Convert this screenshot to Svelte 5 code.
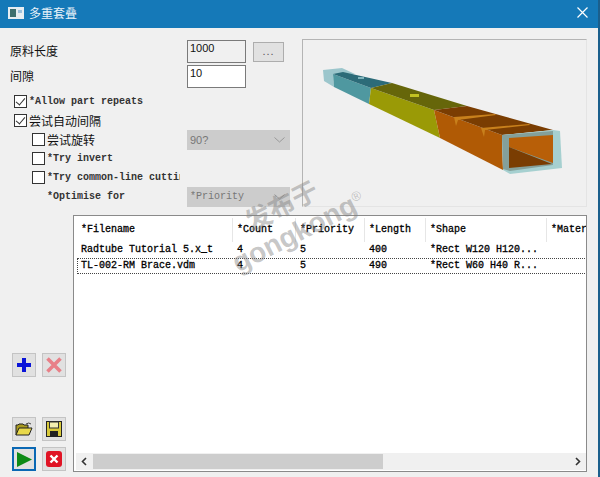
<script>
  const columns = [
    { name: "*Filename", width: 156 },
    { name: "*Count", width: 63 },
    { name: "*Priority", width: 69 },
    { name: "*Length", width: 61 },
    { name: "*Shape", width: 121 },
    { name: "*Mater", width: 60 }
  ];
  const rows = [
    { cells: ["Radtube Tutorial 5.x_t", "4", "5", "400", "*Rect W120 H120..."], active: false },
    { cells: ["TL-002-RM Brace.vdm", "4", "5", "490", "*Rect W60 H40 R..."], active: true }
  ];
</script>

<div class="window">
  <header class="titlebar">
    <svg class="app-icon" width="16" height="12" viewBox="0 0 16 12">
      <rect width="16" height="12" fill="#e6edf2" />
      <rect x="2" y="2" width="6" height="8" fill="#3d6f70" />
      <rect x="10" y="3" width="4" height="3" fill="#9cc0dc" />
    </svg>
    <span class="title">多重套叠</span>
    <svg class="close" width="11" height="11" viewBox="0 0 11 11">
      <path d="M0.5 0.5 10.5 10.5 M10.5 0.5 0.5 10.5" stroke="#fff" stroke-width="1.2" fill="none" />
    </svg>
  </header>

  <div class="top">
    <div class="form">
      <div class="field">
        <span class="label cjk">原料长度</span>
        <div class="input readonly">1000</div>
        <div class="browse">...</div>
      </div>
      <div class="field second">
        <span class="label cjk">间隙</span>
        <div class="input">10</div>
      </div>

      <div class="checks">
        <div class="check-row"><span class="box checked"></span><span class="mono">*Allow part repeats</span></div>
        <div class="check-row"><span class="box checked"></span><span class="cjk">尝试自动间隔</span></div>
        <div class="check-row sub">
          <span class="box"></span><span class="cjk grow">尝试旋转</span>
          <div class="combo">
            <span>90?</span>
            <svg width="11" height="6" viewBox="0 0 11 6"><path d="M0.5 0.5 5.5 5 10.5 0.5" fill="none" stroke="#999" /></svg>
          </div>
        </div>
        <div class="check-row sub"><span class="box"></span><span class="mono">*Try invert</span></div>
        <div class="check-row sub"><span class="box"></span><span class="mono clip">*Try common-line cutting</span></div>
        <div class="check-row sub nobox">
          <span class="mono grow">*Optimise for</span>
          <div class="combo mono">
            <span>*Priority</span>
            <svg width="11" height="6" viewBox="0 0 11 6"><path d="M0.5 0.5 5.5 5 10.5 0.5" fill="none" stroke="#999" /></svg>
          </div>
        </div>
      </div>
    </div>

    <div class="preview">
      <svg width="283" height="166" viewBox="303 40 283 166">
        <polygon points="323,70 342,68 355,74 333,74 334,87 324,81" fill="#9cc6cc" />
        <polygon points="333,74 371,88 369,104 334,87" fill="#4f98a0" />
        <polygon points="333,74 343,72 392,83 371,88" fill="#2c6b78" />
        <polygon points="371,88 434,110 440,138 369,104" fill="#9a9a06" />
        <polygon points="371,88 392,83 467,106 434,110" fill="#66660a" />
        <polygon points="434,110 502,135 503,170 440,138" fill="#b05a05" />
        <polygon points="434,110 467,106 553,130 502,135" fill="#7a3d02" />
        <polygon points="454,117 495,114 496,115 458,120 456,126" fill="#c8801c" />
        <polygon points="481,128 529,124 530,125 485,130 484,137" fill="#c8801c" />
        <rect x="358" y="77" width="6" height="2" fill="#7fb4bc" />
        <rect x="410" y="94" width="9" height="3" fill="#c2c222" />
        <polygon points="502,135 553,130 560,131 562,168 510,174 503,170" fill="#a6d0d0" />
        <polygon points="502,135 553,131 553,165 510,171 503,169" fill="#84a09a" />
        <polygon points="509,138 553,135 553,163 509,147" fill="#b85f08" />
        <polygon points="509,147 552,164 509,168" fill="#7a3d02" />
      </svg>
    </div>
  </div>

  <div class="bottom">
    <aside class="tools">
      <div class="tool-group">
        <button class="tool" aria-label="Add">
          <svg width="16" height="16" viewBox="0 0 16 16"><path d="M6 1h4v5h5v4h-5v5H6v-5H1V6h5z" fill="#0a14d8" /></svg>
        </button>
        <button class="tool" aria-label="Remove">
          <svg width="16" height="16" viewBox="0 0 16 16"><path d="M1.5 1.5 14.5 14.5 M14.5 1.5 1.5 14.5" stroke="#e88088" stroke-width="3.6" /></svg>
        </button>
      </div>
      <div class="tool-group">
        <button class="tool" aria-label="Open">
          <svg width="18" height="16" viewBox="0 0 18 16">
            <path d="M1 14V4h2l1-1h4l1 1h4v3" fill="#a89a20" stroke="#222" stroke-width="1" />
            <path d="M1 14 4 7h13l-3 7z" fill="#e8d84a" stroke="#222" stroke-width="1" />
            <path d="M11 3q3-2 5 0" fill="none" stroke="#444" stroke-width="1" />
          </svg>
        </button>
        <button class="tool" aria-label="Save">
          <svg width="16" height="16" viewBox="0 0 16 16">
            <rect x="0.5" y="0.5" width="15" height="15" fill="#d8c93a" stroke="#222" />
            <rect x="3.5" y="1" width="9" height="6" fill="#f2eeb0" stroke="#333" stroke-width="1" />
            <rect x="4" y="10" width="8" height="5" fill="#222" />
          </svg>
        </button>
      </div>
      <div class="tool-group">
        <button class="tool focus" aria-label="Run">
          <svg width="17" height="17" viewBox="0 0 17 17"><path d="M1 1 16 8.5 1 16z" fill="#0d8a16" /></svg>
        </button>
        <button class="tool" aria-label="Cancel">
          <svg width="16" height="16" viewBox="0 0 16 16">
            <rect width="16" height="16" rx="3" fill="#e01425" />
            <path d="M4.5 4.5 11.5 11.5 M11.5 4.5 4.5 11.5" stroke="#fff" stroke-width="2.4" />
          </svg>
        </button>
      </div>
    </aside>

    <div class="list">
      <div class="table">
        <div class="row head">
          {#each columns as col}
            <div class="cell" style="width: {col.width}px">{col.name}</div>
          {/each}
        </div>
        {#each rows as row}
          <div class="row" class:active={row.active}>
            {#each row.cells as text, i}
              <div class="cell" style="width: {columns[i].width}px">{text}</div>
            {/each}
          </div>
        {/each}
      </div>
      <div class="scrollbar">
        <svg width="17" height="17" viewBox="0 0 17 17"><path d="M10 5 6.5 8.5 10 12" fill="none" stroke="#333" stroke-width="1.6" /></svg>
        <div class="track"><div class="thumb"></div></div>
        <svg width="17" height="17" viewBox="0 0 17 17"><path d="M7 5 10.5 8.5 7 12" fill="none" stroke="#333" stroke-width="1.6" /></svg>
      </div>
    </div>
  </div>

  <div class="watermark" aria-hidden="true">
    <div class="wm-cn">发布于</div>
    <div class="wm-en">gongkong<sup>®</sup></div>
  </div>
</div>

<style>
  :global(body) {
    margin: 0;
    background: #f0f0f0;
  }
  .window {
    position: relative;
    width: 600px;
    height: 477px;
    box-sizing: border-box;
    border-right: 2px solid #1b5f8c;
    background: #f0f0f0;
    display: flex;
    flex-direction: column;
    overflow: hidden;
    font-family: "Noto Sans CJK SC", sans-serif;
    color: #111;
  }
  .titlebar {
    height: 28px;
    flex: none;
    box-sizing: border-box;
    background: #1579b8;
    display: flex;
    align-items: center;
    padding: 0 10px 3px 8px;
    color: #e8f2f8;
    font-size: 12px;
  }
  .title {
    margin-left: 5px;
    flex: 1;
  }
  .top {
    height: 187px;
    flex: none;
    display: flex;
  }
  .form {
    width: 302px;
    flex: none;
    padding: 12px 0 0 10px;
    box-sizing: border-box;
  }
  .field {
    display: flex;
    align-items: center;
    height: 23px;
  }
  .field.second {
    margin-top: 2px;
  }
  .label {
    width: 177px;
    padding-bottom: 3px;
  }
  .cjk {
    font-size: 12px;
    font-family: "Noto Sans CJK SC", sans-serif;
  }
  .mono {
    font-family: "Liberation Mono", monospace;
    font-size: 10px;
    font-weight: 700;
    color: #333;
  }
  .input {
    width: 59px;
    height: 23px;
    box-sizing: border-box;
    border: 1px solid #7a7a7a;
    background: #fff;
    font: 11px/15px "Liberation Sans", sans-serif;
    padding-left: 2px;
  }
  .input.readonly {
    background: #f0f0f0;
  }
  .browse {
    width: 31px;
    height: 20px;
    margin-left: 7px;
    box-sizing: border-box;
    border: 1px solid #adadad;
    background: #e1e1e1;
    text-align: center;
    font: 11px/17px "Liberation Sans", sans-serif;
    letter-spacing: 1px;
    color: #555;
  }
  .checks {
    margin-top: 4px;
    padding-left: 4px;
  }
  .check-row {
    display: flex;
    align-items: center;
    height: 19px;
    width: 276px;
  }
  .check-row.sub {
    padding-left: 18px;
    box-sizing: border-box;
  }
  .check-row.nobox {
    padding-left: 33px;
  }
  .box {
    position: relative;
    width: 13px;
    height: 13px;
    flex: none;
    box-sizing: border-box;
    border: 1px solid #333;
    background: #fff;
    margin-right: 2px;
  }
  .box.checked::after {
    content: "";
    position: absolute;
    left: 3px;
    top: 0;
    width: 4px;
    height: 8px;
    border: solid #333;
    border-width: 0 1.5px 1.5px 0;
    transform: rotate(40deg);
  }
  .grow {
    flex: 1;
  }
  .clip {
    width: 133px;
    overflow: hidden;
    white-space: nowrap;
  }
  .combo {
    width: 103px;
    height: 20px;
    flex: none;
    box-sizing: border-box;
    background: #cccccc;
    display: flex;
    align-items: center;
    justify-content: space-between;
    padding: 0 5px 0 3px;
    font-size: 11px;
    font-family: "Liberation Sans", sans-serif;
    color: #777;
  }
  .combo.mono {
    font-family: "Liberation Mono", monospace;
    font-size: 10px;
    font-weight: 400;
    color: #777;
  }
  .preview {
    width: 285px;
    height: 168px;
    margin: 11px 0 0 0;
    box-sizing: border-box;
    border: solid #b4b4b4;
    border-width: 1.5px 1px 1px 1.5px;
    border-right-color: #e4e4e4;
    border-bottom-color: #e4e4e4;
  }
  .preview svg {
    display: block;
  }
  .bottom {
    flex: 1;
    display: flex;
    min-height: 0;
    padding-bottom: 5px;
  }
  .tools {
    width: 73px;
    flex: none;
    padding: 138px 0 0 12px;
    box-sizing: border-box;
  }
  .tool-group {
    display: flex;
    gap: 6px;
    margin-bottom: 6px;
  }
  .tool-group:nth-child(2) {
    margin-top: 40px;
  }
  .tool {
    width: 24px;
    height: 24px;
    padding: 0;
    box-sizing: border-box;
    border: 1px solid #c4c4c4;
    background: #e1e1e1;
    display: flex;
    align-items: center;
    justify-content: center;
  }
  .tool.focus {
    border: 2px solid #0a68b4;
  }
  .list {
    width: 514px;
    box-sizing: border-box;
    border: 1px solid #8a8a8a;
    background: #fff;
    display: flex;
    flex-direction: column;
    justify-content: space-between;
    padding-left: 3px;
  }
  .table {
    overflow: hidden;
    padding-top: 2px;
  }
  .row {
    display: flex;
    height: 16px;
    box-sizing: border-box;
    font: 400 10px/16px "Liberation Mono", monospace;
    color: #000;
    -webkit-text-stroke: 0.3px #000;
    white-space: nowrap;
    width: 530px;
  }
  .row.head {
    height: 24px;
    line-height: 24px;
  }
  .row.head .cell {
    height: 24px;
    border-right: 1px solid #e6e6e6;
  }
  .row.active {
    outline: 1px dotted #444;
    outline-offset: -1px;
  }
  .cell {
    flex: none;
    box-sizing: border-box;
    padding-left: 4px;
    overflow: hidden;
  }
  .scrollbar {
    height: 17px;
    margin-left: -1px;
    margin-bottom: 1px;
    background: #f0f0f0;
    display: flex;
    align-items: center;
  }
  .track {
    flex: 1;
  }
  .thumb {
    width: 290px;
    height: 15px;
    background: #cdcdcd;
  }
  .watermark {
    position: absolute;
    left: 240px;
    top: 217px;
    transform: rotate(-27deg);
    transform-origin: left bottom;
    color: rgba(130, 130, 130, 0.45);
    font-family: "Liberation Sans", sans-serif;
    font-weight: 700;
    pointer-events: none;
  }
  .wm-cn {
    font-family: "Noto Sans CJK SC", sans-serif;
    font-size: 26px;
    line-height: 28px;
    margin-left: 30px;
  }
  .wm-en {
    font-size: 28px;
    line-height: 26px;
  }
  .wm-en sup {
    font-size: 13px;
    font-weight: 400;
  }
</style>
